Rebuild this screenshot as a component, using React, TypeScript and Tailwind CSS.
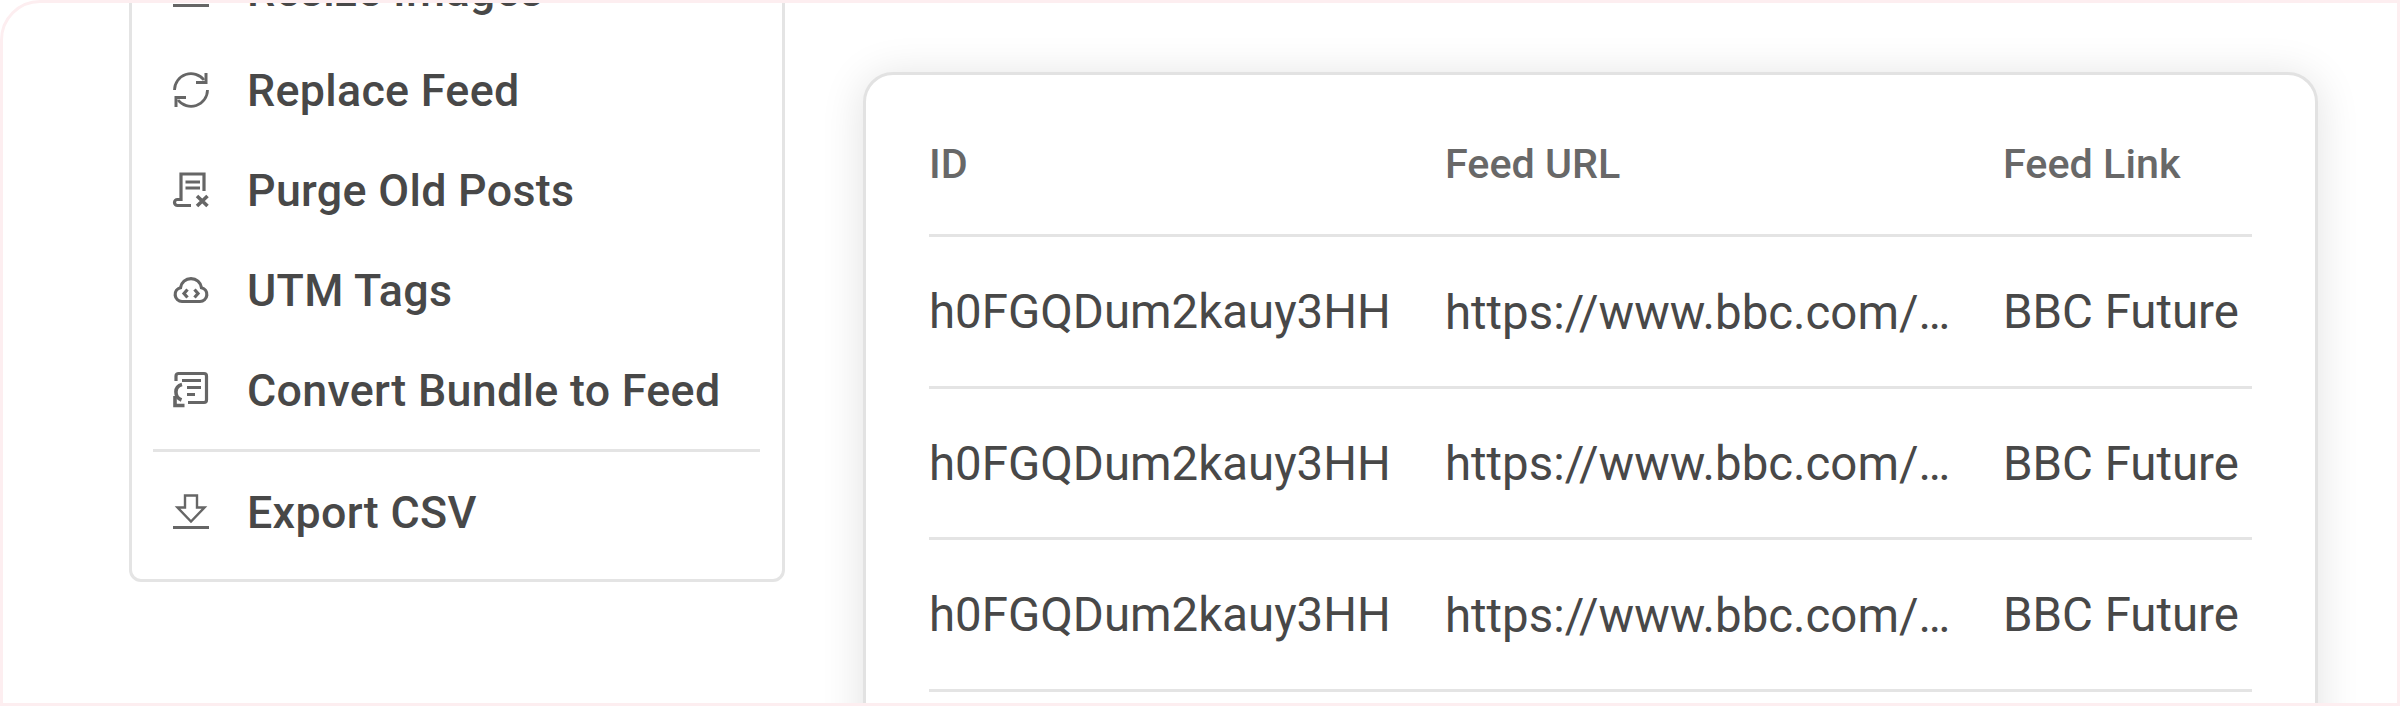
import React from "react";

const rows = [1, 2, 3, 4];

const iconProps = {
  width: 36,
  height: 36,
  viewBox: "0 0 36 36",
  fill: "none",
  stroke: "#666666",
  strokeWidth: 3.2,
  className: "shrink-0 overflow-visible",
};

const ResizeIcon = () => (
  <svg {...iconProps}>
    <path d="M2 2H34V25H2Z" />
    <path d="M0 33.5H36" />
  </svg>
);

const RefreshIcon = () => (
  <svg {...iconProps}>
    <path d="M1.5 18A16.5 16.5 0 0 1 31 8" strokeWidth={2.8} />
    <path d="M33 1V10.5H23" strokeWidth={3} />
    <path d="M34.5 18A16.5 16.5 0 0 1 5 28" strokeWidth={2.8} />
    <path d="M3 35V25.5H13" strokeWidth={3} />
  </svg>
);

const PurgeIcon = () => (
  <svg {...iconProps}>
    <path d="M31 19V2H8V29" />
    <path d="M18 33.5H4.5A3 3 0 0 1 4.5 27.5H8" />
    <path d="M12.5 10H27M12.5 16H27" />
    <path d="M24 24L34.5 34M34.5 24L24 34" strokeWidth={3.6} />
  </svg>
);

const CloudIcon = () => (
  <svg {...iconProps}>
    <path d="M9 29.5H27A7 7 0 0 0 28.5 15.7A10.6 10.6 0 0 0 7.5 15.7A7 7 0 0 0 9 29.5Z" />
    <path d="M14.5 17.5L11 21.5L14.5 25.5M21.5 17.5L25 21.5L21.5 25.5" />
  </svg>
);

const ConvertIcon = () => (
  <svg {...iconProps}>
    <path d="M3 9V4A2.5 2.5 0 0 1 5.5 1.5H31A2.5 2.5 0 0 1 33.5 4V28A2.5 2.5 0 0 1 31 30.5H15" />
    <path d="M9 8.5H28M14 15.5H28M14 22.5H22" />
    <path d="M9 12.5C1 14.5 1 25 8.5 28" strokeWidth={3.6} />
    <path d="M2 24V33.5H11.5" strokeWidth={3.6} />
  </svg>
);

const ExportIcon = () => (
  <svg {...iconProps} strokeWidth={2.4}>
    <path d="M12 1.5H24V13.5H31.5L18 27.5L4.5 13.5H12Z" />
    <path d="M0 33.5H36" strokeWidth={3} />
  </svg>
);

const MenuItem = ({ icon, label }: { icon: React.ReactNode; label: string }) => (
  <div className="flex h-[100px] items-center gap-[38px] pl-[41px] text-[44.8px] font-medium tracking-[0.3px] text-[#484848]">
    {icon}
    <span className="pt-[2px]">{label}</span>
  </div>
);

export default function App() {
  return (
    <div className="h-[706px] w-[2400px] bg-white font-['Roboto',sans-serif]">
      <div className="flex h-full items-start overflow-hidden rounded-tl-[40px] border-[3px] border-[#fdeef0] bg-white pl-[126px]">
        <div className="mt-[-83px] w-[656px] shrink-0 rounded-[12px] border-[3px] border-[#e4e4e4] bg-white pt-[17px] pb-[17px]">
          <MenuItem icon={<ResizeIcon />} label="Resize Images" />
          <MenuItem icon={<RefreshIcon />} label="Replace Feed" />
          <MenuItem icon={<PurgeIcon />} label="Purge Old Posts" />
          <MenuItem icon={<CloudIcon />} label="UTM Tags" />
          <MenuItem icon={<ConvertIcon />} label="Convert Bundle to Feed" />
          <div className="mt-[9px] mr-[22px] mb-[10px] ml-[21px] h-[3px] bg-[#e4e4e4]" />
          <MenuItem icon={<ExportIcon />} label="Export CSV" />
        </div>

        <div className="mt-[69px] ml-[78px] w-[1455px] shrink-0 rounded-[30px] border-[3px] border-[#e2e2e2] bg-white px-[63px] shadow-[0_4px_44px_rgba(0,0,0,0.12)]">
          <div className="grid h-[162px] grid-cols-[516px_558px_248px] items-center border-b-[3px] border-[#e4e4e4] pt-[21px] text-[41.3px] font-medium text-[#686868]">
            <div>ID</div>
            <div>Feed URL</div>
            <div>Feed Link</div>
          </div>
          {rows.map((row) => (
            <div
              key={row}
              className="grid h-[151.5px] grid-cols-[516px_558px_248px] items-center border-b-[3px] border-[#e4e4e4] pt-[3px] text-[47.4px] text-[#484848]"
            >
              <div className="whitespace-nowrap">h0FGQDum2kauy3HH</div>
              <div className="truncate pt-[1px] pr-[50px]">https://www.bbc.com/future/feed.rss</div>
              <div className="whitespace-nowrap">BBC Future</div>
            </div>
          ))}
        </div>
      </div>
    </div>
  );
}
